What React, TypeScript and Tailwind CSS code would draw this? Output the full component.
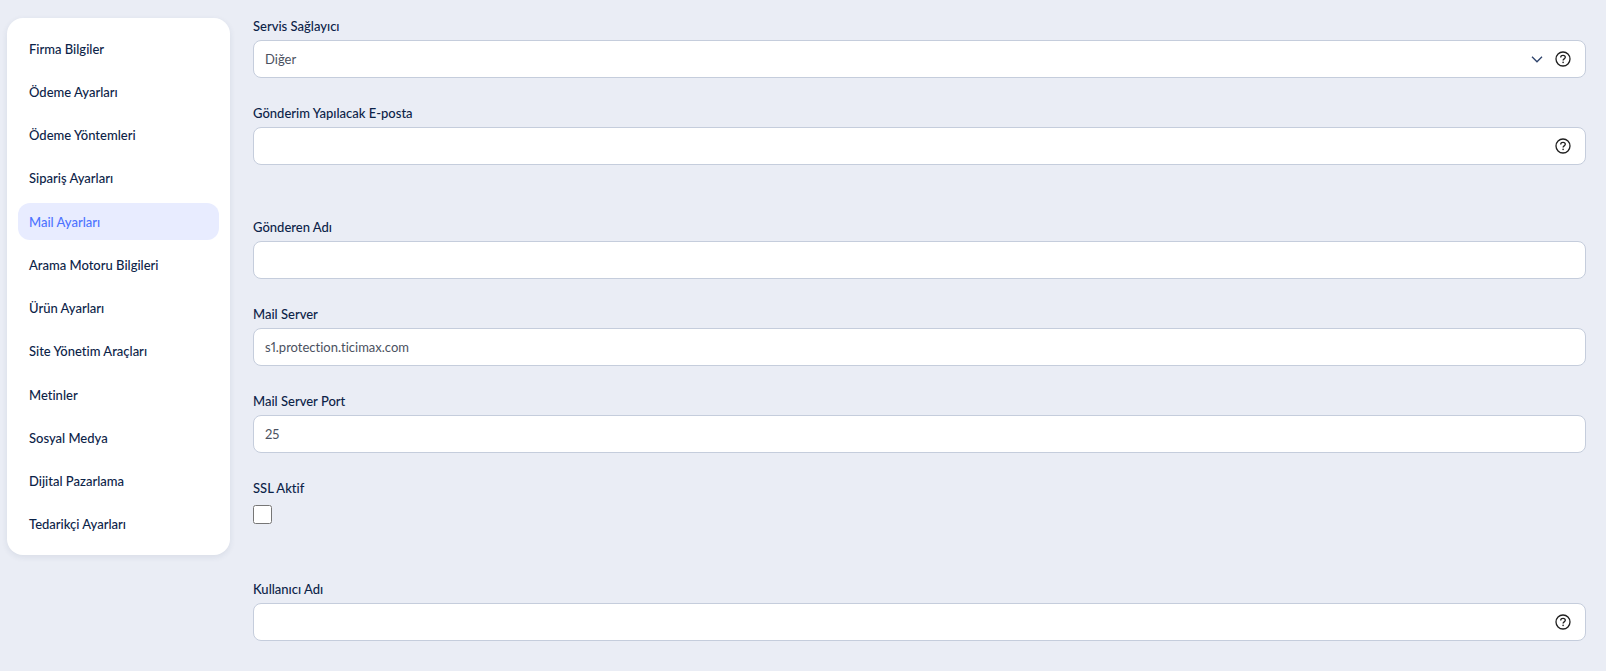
import { useState } from "react";

const menuItems = [
  "Firma Bilgiler",
  "Ödeme Ayarları",
  "Ödeme Yöntemleri",
  "Sipariş Ayarları",
  "Mail Ayarları",
  "Arama Motoru Bilgileri",
  "Ürün Ayarları",
  "Site Yönetim Araçları",
  "Metinler",
  "Sosyal Medya",
  "Dijital Pazarlama",
  "Tedarikçi Ayarları",
];

const labelClass = "mb-1 block text-[13px] leading-5 font-medium text-[#0c2348]";
const inputClass =
  "block h-[38px] w-full rounded-lg border border-[#c5cddc] bg-white px-[11px] text-[13px] leading-5 proportional-nums text-[#4b5160] focus:outline-none focus:border-[#4d73ff]";

function HelpButton() {
  return (
    <button type="button" aria-label="Yardım" className="absolute inset-y-0 right-[15px] flex items-center">
      <svg viewBox="0 0 16 16" fill="none" stroke="#1f1f1f" className="h-4 w-4">
        <circle cx="8" cy="8" r="7" strokeWidth="1.3" />
        <path
          d="M5.7 6.4C5.7 5.1 6.7 4.3 8 4.3s2.3.8 2.3 2c0 1.5-2.2 1.6-2.2 3.1"
          strokeWidth="1.3"
        />
        <circle cx="8.1" cy="11.4" r="0.8" fill="#1f1f1f" stroke="none" />
      </svg>
    </button>
  );
}

interface TextFieldProps {
  id: string;
  label: string;
  defaultValue?: string;
  help?: boolean;
}

function TextField({ id, label, defaultValue = "", help = false }: TextFieldProps) {
  return (
    <div>
      <label htmlFor={id} className={labelClass}>
        {label}
      </label>
      <div className="relative">
        <input id={id} type="text" defaultValue={defaultValue} className={inputClass} />
        {help && <HelpButton />}
      </div>
    </div>
  );
}

export default function App() {
  const [active, setActive] = useState("Mail Ayarları");

  return (
    <div className="flex min-h-screen items-start gap-[23px] bg-[#eaedf5] pt-4 pr-5 pb-6 pl-[7px] font-['Lato','Noto_Sans',sans-serif] [font-variant-ligatures:none]">
      <nav className="mt-[2px] flex min-h-[537px] w-[223px] shrink-0 flex-col justify-between rounded-2xl bg-white px-[11px] pt-3 pb-3 shadow-[0_2px_6px_rgba(30,50,90,0.09)]">
        {menuItems.map((item) => (
          <a
            key={item}
            href="#"
            onClick={() => setActive(item)}
            className={`flex h-[37px] items-center rounded-xl px-[11px] text-[13px] leading-5 font-medium ${
              item === active ? "bg-[#e8ecff] text-[#4d73ff]" : "text-[#0c2348]"
            }`}
          >
            {item}
          </a>
        ))}
      </nav>

      <form className="flex min-w-0 flex-1 flex-col gap-[52px]">
        <div className="flex flex-col gap-[25px]">
          <div>
            <label htmlFor="provider" className={labelClass}>
              Servis Sağlayıcı
            </label>
            <div className="relative">
              <select id="provider" className={`${inputClass} appearance-none`}>
                <option>Diğer</option>
              </select>
              <svg
                viewBox="0 0 12 7"
                fill="none"
                stroke="#2d426b"
                strokeWidth="1.3"
                className="pointer-events-none absolute top-4 right-[43px] h-[7px] w-3"
              >
                <path d="M1 0.8 6 5.8 11 0.8" />
              </svg>
              <HelpButton />
            </div>
          </div>
          <TextField id="target-mail" label="Gönderim Yapılacak E-posta" help />
        </div>

        <div className="flex flex-col gap-[25px]">
          <TextField id="sender" label="Gönderen Adı" />
          <TextField id="server" label="Mail Server" defaultValue="s1.protection.ticimax.com" />
          <TextField id="port" label="Mail Server Port" defaultValue="25" />
          <div className="pb-[3px]">
            <label htmlFor="ssl" className={labelClass}>
              SSL Aktif
            </label>
            <input id="ssl" type="checkbox" className="mt-[7px] block h-[19px] w-[19px]" />
          </div>
        </div>

        <TextField id="username" label="Kullanıcı Adı" help />
      </form>
    </div>
  );
}
